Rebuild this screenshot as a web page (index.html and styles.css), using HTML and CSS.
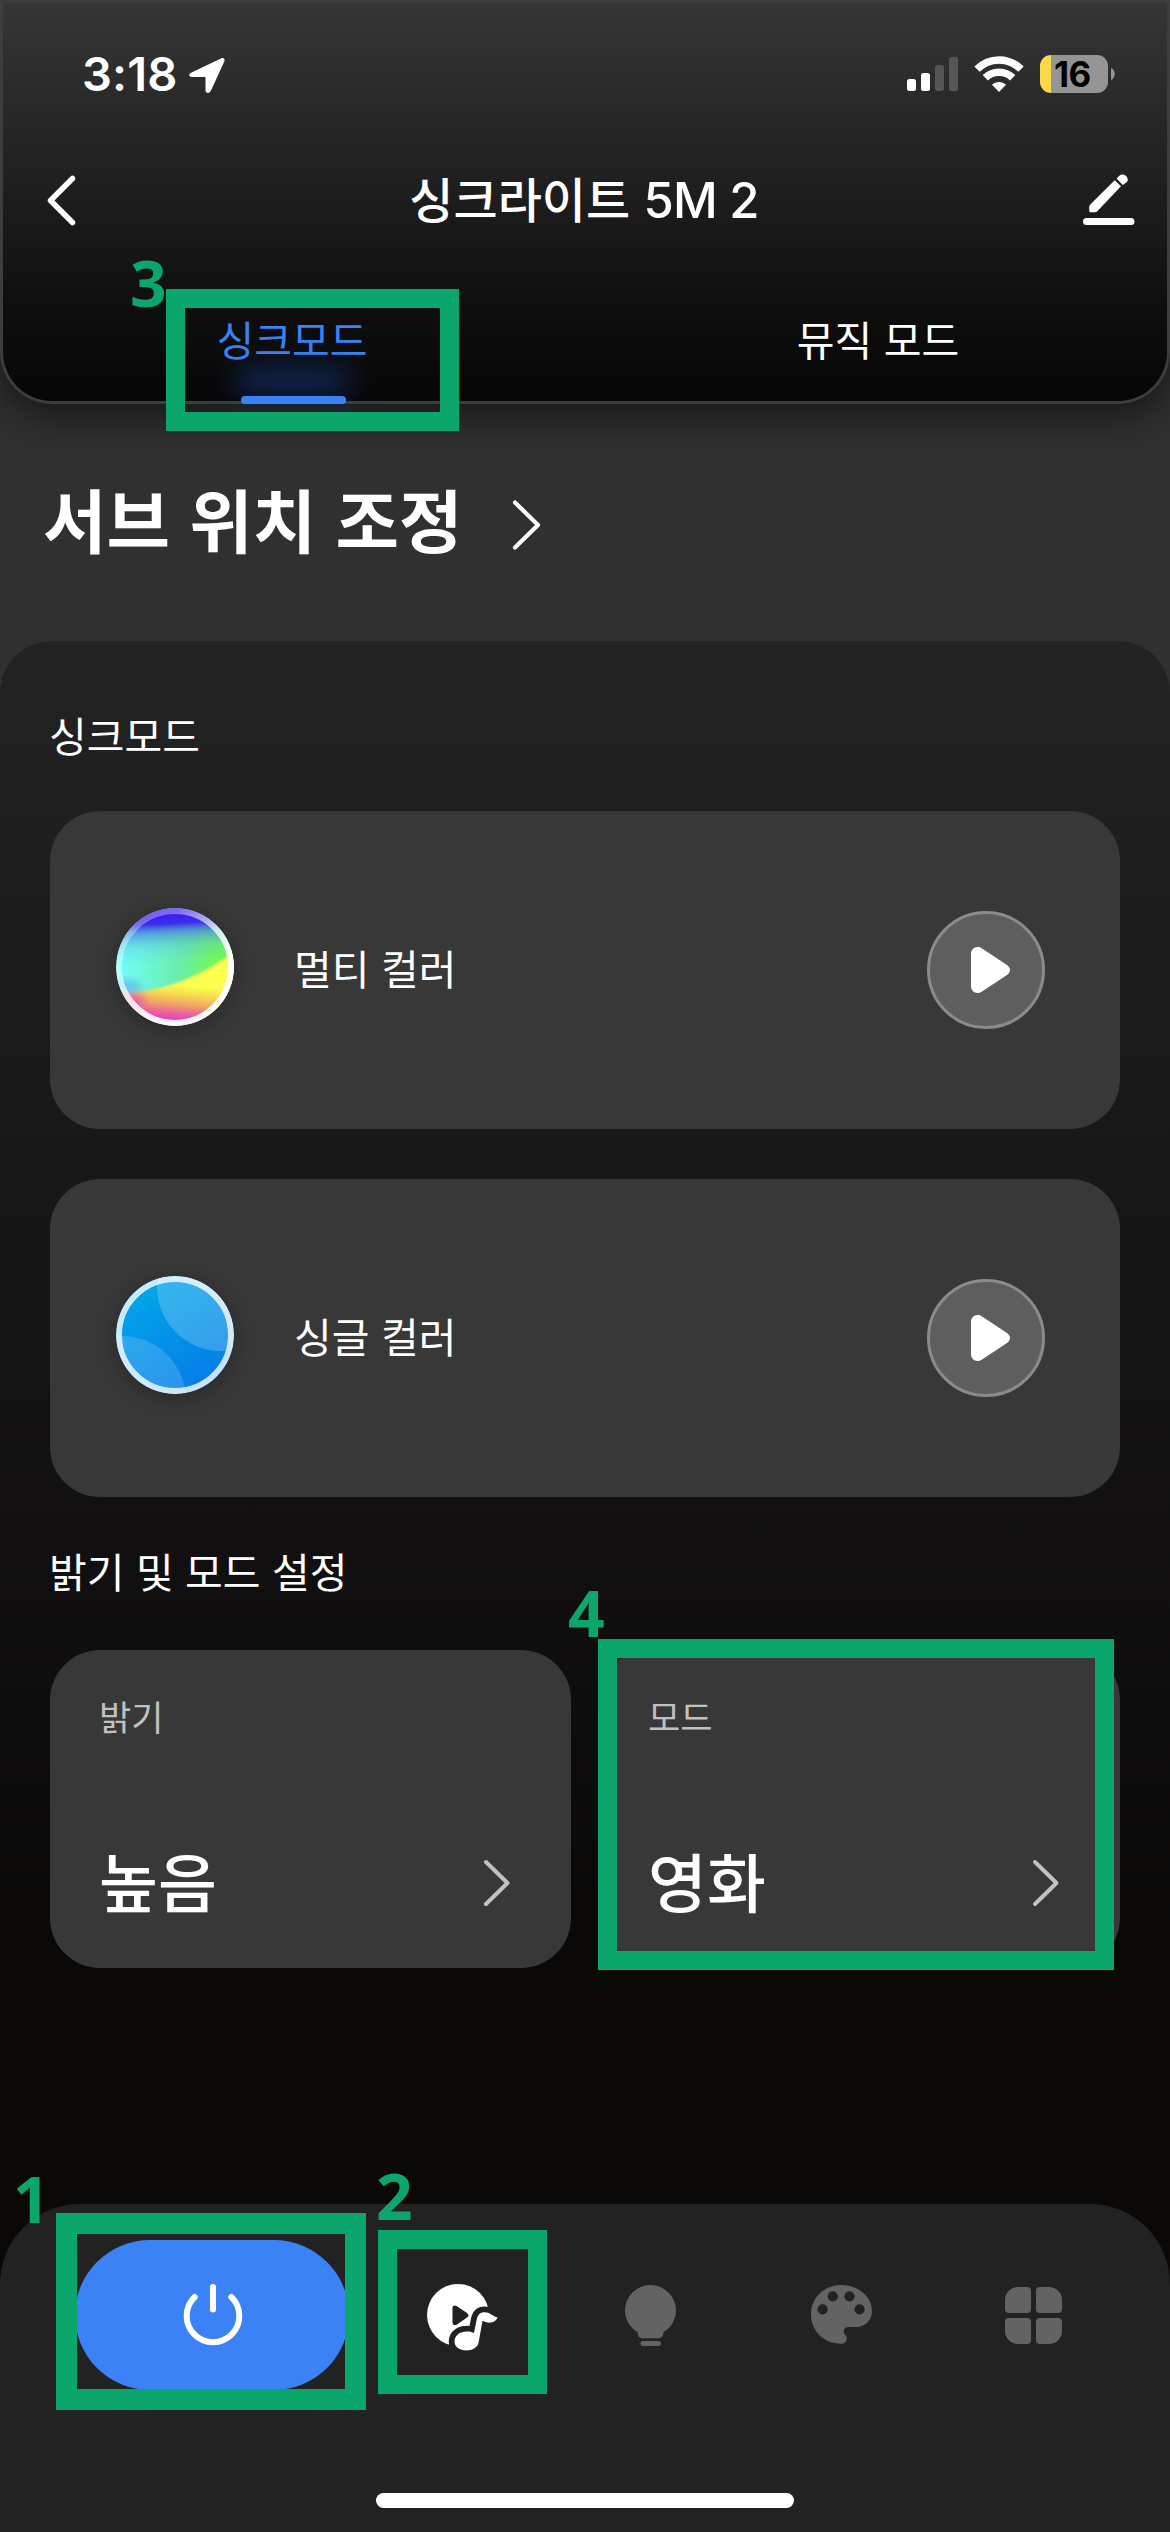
FILE: index.html
```html
<!DOCTYPE html>
<html lang="ko">
<head>
<meta charset="utf-8">
<title>싱크라이트 5M 2</title>
<link rel="stylesheet" href="styles.css">
</head>
<body>
<div class="screen">
  <header class="header">
    <div class="status">
      <span class="time">3:18</span>
      <svg class="locate" width="36" height="37" viewBox="189 57 36 37"><path d="M221 58.500 191.500 72.500C188 74 189 77 192 77H204.500C205.300 77 205.500 77.300 205.500 78V90C205.500 93.500 209.500 94 211 90.500L224.300 61.500C225.200 59 223.500 57.300 221 58.500Z" fill="#fff"/></svg>
      <svg class="signal" width="51" height="34" viewBox="0 0 51 34"><g fill="#fff"><rect y="22" width="9" height="12" rx="2.500"/><rect x="14" y="16" width="9" height="18" rx="2.500"/></g><g fill="#565656"><rect x="28" y="8" width="9" height="26" rx="2.500"/><rect x="42" width="9" height="34" rx="2.500"/></g></svg>
      <svg class="wifi" width="50" height="36" viewBox="0 0 50 36"><g fill="none" stroke="#fff" stroke-width="7.500"><path d="M3 13.200C15.500 .8 34.500 .8 47 13.200"/><path d="M11.300 21.800C19 14.500 31 14.500 38.700 21.800"/></g><path d="M25 36 18 28.800C22 25 28 25 32 28.800Z" fill="#fff"/></svg>
      <div class="battery"><div class="cell">16</div><svg width="4" height="12" viewBox="0 0 4 12"><path d="M0 0C5 2 5 10 0 12Z" fill="#959595"/></svg></div>
    </div>
    <div class="titlebar">
      <svg class="back" width="30" height="56" viewBox="46 172 30 56"><path d="M72.500 178.500 50.500 200.500 72.500 222.500" fill="none" stroke="#fff" stroke-width="5.500" stroke-linecap="round" stroke-linejoin="round"/></svg>
      <h1 class="title">싱크라이트 <span class="latin">5M 2</span></h1>
      <svg class="edit" width="52" height="52" viewBox="1083 175 52 52" fill="#fff"><rect x="1083" y="219" width="51.500" height="7" rx="3.500"/><path d="M1089.200 208.500C1089.200 207 1089.500 206.300 1090.300 205.400L1114.700 181.300 1121 187.300 1097.500 212C1096.700 212.800 1096 213.200 1095 213.200H1091C1089.700 213.200 1089.200 212.600 1089.200 211.500ZM1116.600 179.500 1119.300 176.700C1123.500 172.800 1130 178.500 1127 183L1122.800 186Z"/></svg>
    </div>
    <div class="tabs">
      <div class="tab active">싱크모드</div>
      <div class="tab">뮤직 모드</div>
    </div>
  </header>

  <div class="position">
    <h2>서브 위치 조정</h2>
    <svg width="30" height="52" viewBox="0 0 30 52"><path d="M3 3.500 26 26 3 48.500" fill="none" stroke="#fff" stroke-width="4.200" stroke-linecap="round" stroke-linejoin="round"/></svg>
  </div>

  <main class="panel">
    <h3 class="label first">싱크모드</h3>
    <section class="card row">
      <svg class="orb" width="118" height="118" viewBox="0 0 118 118">
        <defs>
          <clipPath id="disc"><circle cx="59" cy="59" r="59"/></clipPath>
          <linearGradient id="sea"><stop offset="0" stop-color="#6ffcff"/><stop offset=".15" stop-color="#6efbe8"/><stop offset=".55" stop-color="#6aeea5"/><stop offset=".88" stop-color="#70fb4d"/></linearGradient>
          <linearGradient id="sky" x2="0" y2="1"><stop offset=".06" stop-color="#3d1cf3"/><stop offset=".13" stop-color="#3b30e8"/><stop offset=".2" stop-color="#4a80e4" stop-opacity=".75"/><stop offset=".32" stop-color="#55b0e0" stop-opacity=".3"/><stop offset=".48" stop-color="#6cf" stop-opacity="0"/></linearGradient>
          <linearGradient id="sun" gradientUnits="userSpaceOnUse" x1="62" y1="64" x2="57" y2="116"><stop offset=".25" stop-color="#faff50"/><stop offset=".42" stop-color="#f8da50"/><stop offset=".62" stop-color="#f0a465"/><stop offset=".78" stop-color="#ec6495"/><stop offset=".92" stop-color="#ea3bcb"/></linearGradient>
          <linearGradient id="rim" x2=".55" y2="1"><stop offset="0" stop-color="#fff" stop-opacity=".2"/><stop offset=".45" stop-color="#fff" stop-opacity=".5"/><stop offset=".8" stop-color="#fff" stop-opacity=".75"/></linearGradient>
          <linearGradient id="rimr" x1=".4" x2="1" y1=".1" y2=".8"><stop offset="0" stop-color="#fff" stop-opacity="0"/><stop offset=".7" stop-color="#fff" stop-opacity=".8"/></linearGradient>
          <filter id="s1" x="-30%" y="-30%" width="160%" height="160%"><feGaussianBlur stdDeviation="1.300"/></filter>
          <filter id="s6" x="-50%" y="-50%" width="200%" height="200%"><feGaussianBlur stdDeviation="5"/></filter>
        </defs>
        <g clip-path="url(#disc)">
          <rect width="118" height="118" fill="url(#sea)"/>
          <rect width="118" height="118" fill="url(#sky)" transform="rotate(-3 59 59)"/>
          <path d="M-10 86C30 85 68 82 130 36V140H-10Z" fill="url(#sun)" filter="url(#s1)"/>
          <ellipse cx="14" cy="94" rx="15" ry="9" fill="#ec5fa5" filter="url(#s6)"/>
          <ellipse cx="8" cy="78" rx="18" ry="5" fill="#5fb4e8" filter="url(#s6)"/>
        </g>
        <circle cx="59" cy="59" r="56" fill="none" stroke="url(#rim)" stroke-width="6"/>
        <circle cx="59" cy="59" r="56" fill="none" stroke="url(#rimr)" stroke-width="6"/>
      </svg>
      <span class="name">멀티 컬러</span>
      <button class="play" aria-label="재생"><svg width="40" height="46" viewBox="0 0 40 46"><path d="M0 7C0 1 6 -2 11 1.500L36 18C40 21 40 25 36 28L11 44.500C6 48 0 45 0 39Z" fill="#fff"/></svg></button>
    </section>
    <section class="card row">
      <svg class="orb" width="118" height="118" viewBox="0 0 118 118">
        <defs>
          <clipPath id="dot"><circle cx="59" cy="59" r="59"/></clipPath>
          <linearGradient id="blue" x1=".2" y1=".1" x2=".7" y2="1"><stop offset="0" stop-color="#02a6e8"/><stop offset="1" stop-color="#047be9"/></linearGradient>
        </defs>
        <g clip-path="url(#dot)"><rect width="118" height="118" fill="url(#blue)"/><circle cx="105" cy="11" r="64" fill="#fff" opacity=".2"/><circle cx="6" cy="124" r="64" fill="#fff" opacity=".16"/></g>
        <circle cx="59" cy="59" r="56" fill="none" stroke="#fff" stroke-opacity=".78" stroke-width="6"/>
      </svg>
      <span class="name">싱글 컬러</span>
      <button class="play" aria-label="재생"><svg width="40" height="46" viewBox="0 0 40 46"><path d="M0 7C0 1 6 -2 11 1.500L36 18C40 21 40 25 36 28L11 44.500C6 48 0 45 0 39Z" fill="#fff"/></svg></button>
    </section>
    <h3 class="label">밝기 및 모드 설정</h3>
    <div class="settings">
      <section class="card setting">
        <span class="key">밝기</span>
        <div class="value"><strong>높음</strong><svg width="28" height="48" viewBox="0 0 28 48"><path d="M3 3 24.500 24 3 45" fill="none" stroke="#c1c1c1" stroke-width="4" stroke-linecap="round" stroke-linejoin="round"/></svg></div>
      </section>
      <section class="card setting">
        <span class="key">모드</span>
        <div class="value"><strong>영화</strong><svg width="28" height="48" viewBox="0 0 28 48"><path d="M3 3 24.500 24 3 45" fill="none" stroke="#c1c1c1" stroke-width="4" stroke-linecap="round" stroke-linejoin="round"/></svg></div>
      </section>
    </div>

    <nav class="dock">
      <div class="items">
        <div class="power"><svg width="60" height="64" viewBox="183 2283 60 64" fill="none" stroke="#fff" stroke-width="6" stroke-linecap="round"><path d="M194.700 2297A26.300 26.300 0 1 0 231.300 2297M213 2287V2309.500"/></svg></div>
        <div class="item"><svg width="72" height="68" viewBox="427 2284 72 68"><circle cx="458" cy="2315" r="31" fill="#fff"/><path d="M452.500 2308C452.500 2305.500 455 2305 457 2306.300L467 2313C469 2314.500 469 2316 467 2317.500L457 2324.500C455 2325.700 452.500 2325 452.500 2322.500Z" fill="#222"/><path d="M466.500 2331.500C470 2331.300 472 2332 474 2333L476.700 2319.500C477.700 2314.700 480 2312.200 484.500 2312.200C490 2312.200 492 2315.800 497.700 2317.600C495 2323.500 488.500 2324 482.500 2320.800L478.700 2342C477.800 2347.500 472.500 2350.500 466.500 2350.500C459.500 2350.500 454.500 2347 454.500 2341.500C454.500 2335.500 460 2331.500 466.500 2331.500Z" fill="#fff" stroke="#222" stroke-width="11.500" paint-order="stroke"/></svg></div>
        <div class="item"><svg width="51" height="62" viewBox="625 2285 51 62" fill="#636363"><path d="M650.500 2285A25.500 25.500 0 0 1 676 2310.500C676 2319.500 671 2327.500 663.500 2332.300C663.500 2336 661.500 2338.300 658.500 2338.300H642.500C639.500 2338.300 637.700 2336 637.500 2332.300C630 2327.500 625 2319.500 625 2310.500A25.500 25.500 0 0 1 650.500 2285Z"/><rect x="640.500" y="2341" width="20.500" height="5" rx="2.500"/></svg></div>
        <div class="item"><svg width="62" height="60" viewBox="811 2285 62 60"><path d="M841 2285C824 2285 811 2298 811 2314.500C811 2331 824 2343.700 841 2343.700C846 2343.700 848.500 2338.500 845.500 2335C842 2331.500 844 2327 848.500 2327H856.500C865 2327 872 2320 872 2311.500C872 2296.500 858.500 2285 841 2285Z" fill="#636363"/><g fill="#222"><circle cx="822.600" cy="2309.300" r="5.100"/><circle cx="832.800" cy="2296.300" r="5.100"/><circle cx="849.500" cy="2296.300" r="5.100"/><circle cx="859.600" cy="2309.300" r="5.100"/></g></svg></div>
        <div class="item tiles"><i></i><i></i><i></i><i></i></div>
      </div>
      <div class="home"></div>
    </nav>
  </main>

  <div class="mark m1"><b>1</b></div>
  <div class="mark m2"><b>2</b></div>
  <div class="mark m3"><b>3</b></div>
  <div class="mark m4"><b>4</b></div>
</div>
</body>
</html>
```
FILE: styles.css
```css
* { box-sizing: border-box; margin: 0; }
body { background: #000; color: #fff; font-family: "Noto Sans CJK KR", sans-serif; }
svg { display: block; flex: none; }
.screen { position: relative; width: 1170px; height: 2532px; overflow: hidden; background: #303030; display: flex; flex-direction: column; }

.header {
  position: relative; height: 404px; flex: none;
  background: linear-gradient(#363636, #212121 42%, #0f0f0f 75%, #060606);
  border-radius: 0 0 52px 52px;
  box-shadow: inset 0 0 0 3px #3d3d3d, 0 8px 44px rgba(0, 0, 0, .6);
}
.status { height: 148px; display: flex; align-items: center; padding: 0 55px 0 82px; }
.time { width: 107px; font: 600 47px/60px Inter, sans-serif; letter-spacing: .2px; white-space: nowrap; }
.locate { margin-top: 2px; }
.signal { margin-left: auto; }
.wifi { margin: 0 16px 0 16px; }
.battery { display: flex; align-items: center; gap: 3px; }
.cell { width: 68px; height: 38px; border-radius: 11px; background: linear-gradient(90deg, #f9d84a 11px, #959595 11px); color: #000; font: 700 35px/38px Inter, sans-serif; letter-spacing: -.7px; padding-left: 14px; }
.titlebar { height: 104px; display: flex; align-items: center; justify-content: space-between; padding: 0 35px 0 46px; }
.title { font-size: 48px; line-height: 60px; font-weight: 500; white-space: nowrap; padding: 0 0 2px 9px; }
.latin { font: 500 49px/60px Inter, sans-serif; letter-spacing: -.8px; }
.tabs { display: flex; height: 152px; }
.tab { position: relative; flex: 1; padding-top: 56px; text-align: center; font-size: 41px; line-height: 60px; }
.tab.active { color: #3b82f6; padding-right: 2px; }
.active::before { content: ""; position: absolute; left: 238px; bottom: 10px; width: 110px; height: 26px; background: #1b4db0; opacity: .5; filter: blur(15px); }
.active::after { content: ""; position: absolute; left: 241px; bottom: 0; width: 105px; height: 8px; border-radius: 4px; background: #3b82f6; }

.position { height: 237px; flex: none; display: flex; align-items: center; padding-left: 43px; gap: 49px; }
.position h2 { font-size: 69px; line-height: 90px; font-weight: 700; white-space: nowrap; padding-bottom: 9px; }
.position svg { margin-top: 4px; }

.panel { flex: 1; display: flex; flex-direction: column; border-radius: 52px 52px 0 0; background: linear-gradient(#232323, #181818 26%, #121011 46%, #0a0908 68%, #0a0907); }
.label { height: 153px; flex: none; padding: 43px 49px 0; font-size: 41px; line-height: 60px; font-weight: 400; }
.first { height: 170px; padding-top: 63px; }
.card { background: #383838; border-radius: 50px; height: 318px; flex: none; }
.row { margin: 0 50px; display: flex; align-items: center; padding: 0 75px 0 66px; }
.row + .row { margin-top: 50px; }
.orb { margin-top: -7px; border-radius: 50%; box-shadow: 0 4px 20px rgba(0, 0, 0, .28); }
.name { margin-left: 60px; padding-bottom: 6px; font-size: 41px; line-height: 60px; }
.play { margin-left: auto; width: 118px; height: 118px; padding: 0 0 0 41px; border: 3px solid #8b8b8b; border-radius: 50%; background: #5e5e5e; display: flex; align-items: center; }
.settings { display: grid; grid-template-columns: 521px 521px; gap: 28px; padding: 0 50px; }
.setting { padding: 40px 60px 0 49px; display: flex; flex-direction: column; }
.key { font-size: 35px; line-height: 52px; color: #c1c1c1; }
.value { display: flex; align-items: center; justify-content: space-between; margin-top: 96px; height: 90px; }
.value strong { font-size: 64px; line-height: 90px; font-weight: 500; padding-bottom: 9px; }

.dock { margin-top: auto; height: 328px; background: #222; border-radius: 80px 80px 0 0; display: flex; flex-direction: column; align-items: center; }
.items { width: 1170px; height: 289px; padding: 36px 107px 0 75px; display: flex; align-items: flex-start; }
.power { width: 274px; height: 150px; border-radius: 75px; background: #3b82f6; display: flex; align-items: center; justify-content: center; padding-left: 2px; }
.item { height: 150px; padding-top: 45px; }
.power + .item { margin: -1px 0 0 78px; }
.item:nth-child(3) { margin-left: 126px; }
.item:nth-child(4) { margin-left: 135px; }
.tiles { margin-left: 132px; padding: 47px 0 0; height: auto; display: grid; grid-template-columns: 26px 26px; gap: 5px; }
.tiles i { height: 26px; background: #636363; border-radius: 13px 4px 4px 4px; }
.tiles i:nth-child(2) { border-radius: 4px 13px 4px 4px; }
.tiles i:nth-child(3) { border-radius: 4px 4px 4px 13px; }
.tiles i:nth-child(4) { border-radius: 4px 4px 13px 4px; }
.home { width: 418px; height: 15px; border-radius: 8px; background: #fff; }

.mark { position: absolute; border: 19px solid #0aa66c; color: #0aa66c; }
.mark b { position: absolute; font: 700 64px/64px "Noto Sans", sans-serif; }
.m1 { left: 56px; top: 2213px; width: 310px; height: 197px; border-width: 21px; }
.m2 { left: 378px; top: 2230px; width: 169px; height: 164px; }
.m3 { left: 166px; top: 289px; width: 293px; height: 142px; }
.m4 { left: 598px; top: 1639px; width: 516px; height: 331px; }
.m1 b { left: -64px; top: -67px; }
.m2 b { left: -21px; top: -85px; }
.m3 b { left: -55px; top: -57px; }
.m4 b { left: -49px; top: -77px; }
```
